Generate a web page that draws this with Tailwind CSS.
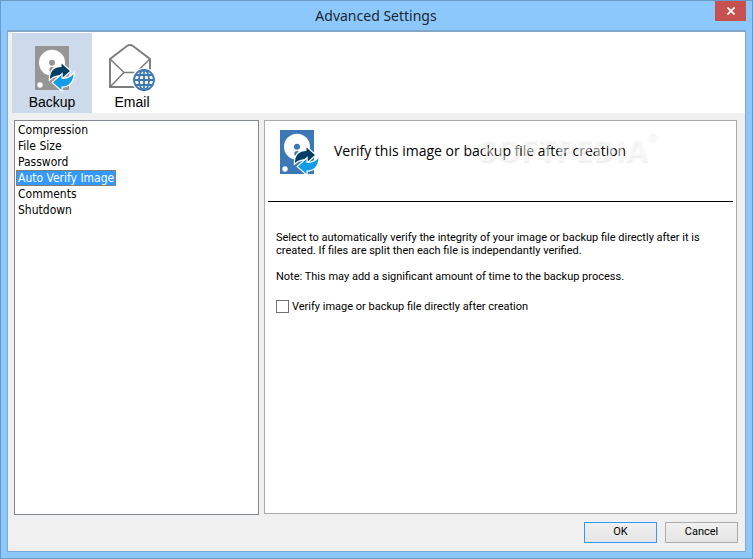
<!DOCTYPE html>
<html lang="en">
  <head>
    <meta charset="UTF-8" />
    <meta name="viewport" content="width=device-width, initial-scale=1.0" />
    <title>Advanced Settings</title>
    <script src="https://cdn.jsdelivr.net/npm/@tailwindcss/browser@4"></script>
  </head>
  <body
    class="flex min-h-screen flex-col border border-[#6a9bc8] bg-[#8cc8fb] font-['Roboto',sans-serif] text-black"
  >
    <!-- Shared drive icon, coloured by the text colour -->
    <svg class="hidden" aria-hidden="true">
      <symbol id="drive" viewBox="0 0 40 48">
        <path fill="currentColor" d="M0 2h34v44H0z" />
        <circle cx="17" cy="18.7" r="13" fill="#fff" />
        <circle cx="17" cy="18.7" r="3" fill="currentColor" />
        <circle cx="17" cy="25.7" r="2.7" fill="currentColor" />
        <circle cx="5" cy="41" r="2.7" fill="#fff" />
        <path
          fill="#003f66"
          stroke="#fff"
          stroke-width="2.4"
          paint-order="stroke"
          d="M15 35C15 27 19 23 26.500 23v-3.500l8.500 7.500-8.500 7.500V31C21.500 31 18.500 32 15 35z"
        />
        <path
          fill="#109de6"
          stroke="#fff"
          stroke-width="2.4"
          paint-order="stroke"
          d="M38.500 30C38 38 34 42.500 26.500 42.500V46l-8.500-7.500 8.500-7.500v4C31.500 35 35 34 38.500 30z"
        />
      </symbol>
    </svg>

    <header class="flex h-[29px] items-start">
      <h1
        class="flex-1 pt-1 pl-9 text-center font-['Noto_Sans',sans-serif] text-[14px] leading-[22px] text-[#1c2733]"
      >
        Advanced Settings
      </h1>
      <button
        type="button"
        aria-label="Close"
        class="mr-[6px] flex h-5 w-[31px] items-center justify-center bg-[#c75050]"
      >
        <svg class="h-2 w-2" viewBox="0 0 8 8" stroke="#fff" stroke-width="1.7">
          <path d="M.5.5l7 7M7.500.5l-7 7" />
        </svg>
      </button>
    </header>

    <main
      class="mx-[6px] mb-[6px] flex flex-1 flex-col border border-t-2 border-[#7aa9d4] border-t-[#83a5c6] bg-[#f0f0f0]"
    >
      <!-- Section toolbar -->
      <nav
        class="ml-1 flex bg-white pt-px font-['Liberation_Sans',sans-serif] text-[14px] leading-4"
      >
        <button
          type="button"
          aria-pressed="true"
          class="flex h-20 w-20 flex-col items-center justify-end bg-[#cddaeb] pb-[3px]"
        >
          <svg class="ml-[6px] h-12 w-10 text-[#969696]">
            <use href="#drive" />
          </svg>
          <span class="mt-[2px]">Backup</span>
        </button>
        <button
          type="button"
          class="flex h-20 w-20 flex-col items-center justify-end pb-[3px]"
        >
          <svg class="h-12 w-12" viewBox="0 0 48 48" fill="none">
            <g stroke="#7c7c7c">
              <path
                stroke-width="1.9"
                d="M2 43V15L19 2q3-2 6 0l17 13v28z"
              />
              <path stroke-width="1.5" d="M2 15l14 13.500h12L42 15M2 43l14-14.500" />
            </g>
            <circle cx="36" cy="36" r="12.300" fill="#fff" />
            <g stroke="#3b78b5" stroke-width="1.8">
              <circle cx="36" cy="36" r="10" />
              <ellipse cx="36" cy="36" rx="5" ry="10" />
              <path d="M36 26v20M26 36h20M28 31h16M28 41h16" />
            </g>
          </svg>
          <span class="mt-[2px]">Email</span>
        </button>
      </nav>

      <div class="flex flex-1 gap-[5px] pt-[7px] pr-2 pl-[6px]">
        <ul
          class="w-[245px] shrink-0 border border-[#828790] bg-white px-px pt-px font-['DejaVu_Sans_Condensed',sans-serif] text-[12px] leading-4"
        >
          <li><button type="button" class="block px-[2px]">Compression</button></li>
          <li><button type="button" class="block px-[2px]">File Size</button></li>
          <li><button type="button" class="block px-[2px]">Password</button></li>
          <li>
            <button
              type="button"
              aria-current="true"
              class="block border border-dotted border-[#cc6600] bg-[#3399ff] px-px leading-[14px] text-white"
            >
              Auto Verify Image
            </button>
          </li>
          <li><button type="button" class="block px-[2px]">Comments</button></li>
          <li><button type="button" class="block px-[2px]">Shutdown</button></li>
        </ul>

        <section
          class="mb-px flex-1 border border-[#acacac] bg-white px-[3px] text-[11px] leading-[13px]"
        >
          <div
            class="relative flex h-[81px] items-start border-b border-black pt-[7px] pl-3"
          >
            <svg class="h-12 w-10 text-[#3b78b5]"><use href="#drive" /></svg>
            <h2
              class="pt-[11px] pl-[14px] font-['Open_Sans',sans-serif] text-[14px] leading-6"
            >
              Verify this image or backup file after creation
            </h2>
            <div
              class="pointer-events-none absolute top-[6px] right-[76px] flex font-['Open_Sans',sans-serif] text-[31px] leading-[44px] font-bold text-white/50 [text-shadow:1px_2px_2px_#00000012]"
              aria-hidden="true"
            >
              SOFTPEDIA<span class="text-[12px] leading-5">®</span>
            </div>
          </div>
          <div class="px-2 pt-[29px]">
            <p>
              Select to automatically verify the integrity of your image or
              backup file directly after it is<br />
              created. If files are split then each file is independantly
              verified.
            </p>
            <p class="mt-[13px]">
              Note: This may add a significant amount of time to the backup
              process.
            </p>
            <label class="mt-[17px] flex items-center gap-[3px]">
              <input
                type="checkbox"
                class="h-[13px] w-[13px] appearance-none border border-[#707070] bg-white checked:bg-[#3399ff]"
              />
              Verify image or backup file directly after creation
            </label>
          </div>
        </section>
      </div>

      <footer class="flex justify-end gap-2 pt-[7px] pr-[7px] pb-2 text-[11px]">
        <button
          type="button"
          class="h-[21px] w-[73px] border border-[#3399ff] bg-linear-to-b from-[#f0f0f0] to-[#e5e5e5]"
        >
          OK
        </button>
        <button
          type="button"
          class="h-[21px] w-[73px] border border-[#acacac] bg-linear-to-b from-[#f0f0f0] to-[#e5e5e5]"
        >
          Cancel
        </button>
      </footer>
    </main>
  </body>
</html>
